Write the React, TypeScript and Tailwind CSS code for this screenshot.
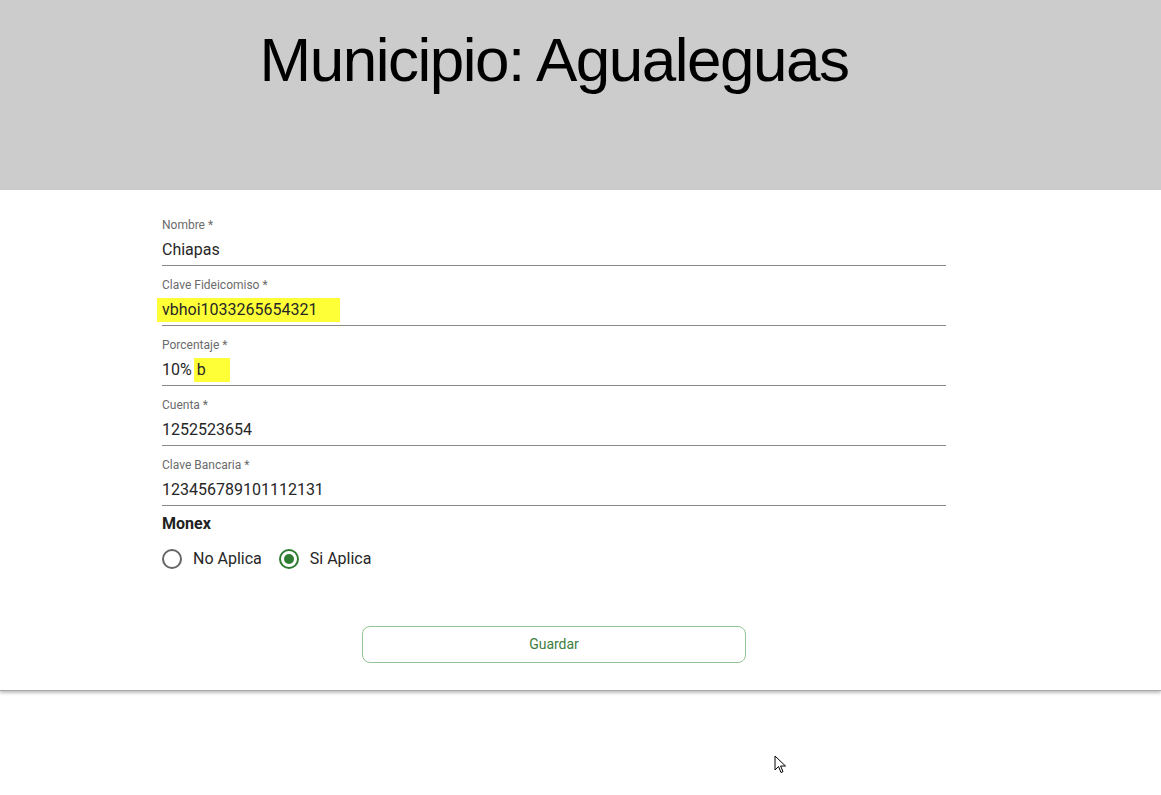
import React from "react";

// Form fields shown on the card
const fields = [
  { label: "Nombre", value: "Chiapas" },
  { label: "Clave Fideicomiso", value: "vbhoi1033265654321", mark: "full" },
  { label: "Porcentaje", value: "10%", mark: "tail" },
  { label: "Cuenta", value: "1252523654" },
  { label: "Clave Bancaria", value: "123456789101112131" },
];

function Field({ label, value, mark }: { label: string; value: string; mark?: string }) {
  return (
    <div className="h-[60px] flex flex-col justify-end">
      <label className="text-xs leading-[14px] text-[#6b6b6b]">{label} *</label>
      <div className="mt-[6px] pb-[3px] border-b border-[#8a8a8a] text-base leading-[24px] text-[#262626] whitespace-pre">
        {mark === "full" ? (
          <span className="inline-block -ml-[5px] pl-[5px] w-[183px] bg-[#ffff38]">{value}</span>
        ) : mark === "tail" ? (
          <>
            {value}
            <span className="inline-block ml-[2px] w-[36px] pl-[3px] bg-[#ffff38]">b</span>
          </>
        ) : (
          value
        )}
      </div>
    </div>
  );
}

function Radio({ checked, label }: { checked?: boolean; label: string }) {
  return (
    <label className="flex items-center gap-[11px]">
      <span
        className={
          "w-[20px] h-[20px] rounded-full border-2 flex items-center justify-center " +
          (checked ? "border-[#2e7d32]" : "border-[#666666]")
        }
      >
        {checked && <span className="w-[10px] h-[10px] rounded-full bg-[#2e7d32]" />}
      </span>
      <span className="text-base text-[#262626]">{label}</span>
    </label>
  );
}

export default function App() {
  return (
    <div className="relative min-h-[795px] bg-white" style={{ fontFamily: "Roboto, 'Liberation Sans', sans-serif" }}>
      {/* Header */}
      <header className="h-[190px] bg-[#cccccc]">
        <div className="ml-[162px] w-[784px] pt-[28px] text-center">
          <h1
            className="text-[62px] leading-[64px] tracking-[-1.5px] text-black"
            style={{ fontFamily: "'Liberation Sans', Arial, sans-serif" }}
          >
            Municipio: Agualeguas
          </h1>
        </div>
      </header>

      {/* Card */}
      <main className="bg-white border-b border-[#a8a8a8] shadow-[0_2px_3px_rgba(0,0,0,0.25)] pt-[16px] pb-[27px]">
        <div className="ml-[162px] w-[784px]">
          {fields.map((f) => (
            <Field key={f.label} {...f} />
          ))}

          <h3 className="mt-[8px] text-base leading-[20px] font-bold text-[#212121]">Monex</h3>
          <div className="mt-[15px] flex items-center gap-[17px] h-[20px]">
            <Radio label="No Aplica" />
            <Radio label="Si Aplica" checked />
          </div>

          <div className="mt-[57px] flex justify-center">
            <button className="w-[384px] h-[37px] rounded-lg border border-[#93c494] text-sm leading-[18px] pb-[2px] text-[#3b7d3e]">
              Guardar
            </button>
          </div>
        </div>
      </main>

      {/* Mouse pointer */}
      <svg className="absolute left-[774px] top-[755px]" width="14" height="20" viewBox="0 0 14 20">
        <path d="M1 1 L1 15 L4.5 11.5 L7 17.5 L9 16.6 L6.6 11 L11.5 11 Z" fill="white" stroke="black" strokeWidth="1" />
      </svg>
    </div>
  );
}
